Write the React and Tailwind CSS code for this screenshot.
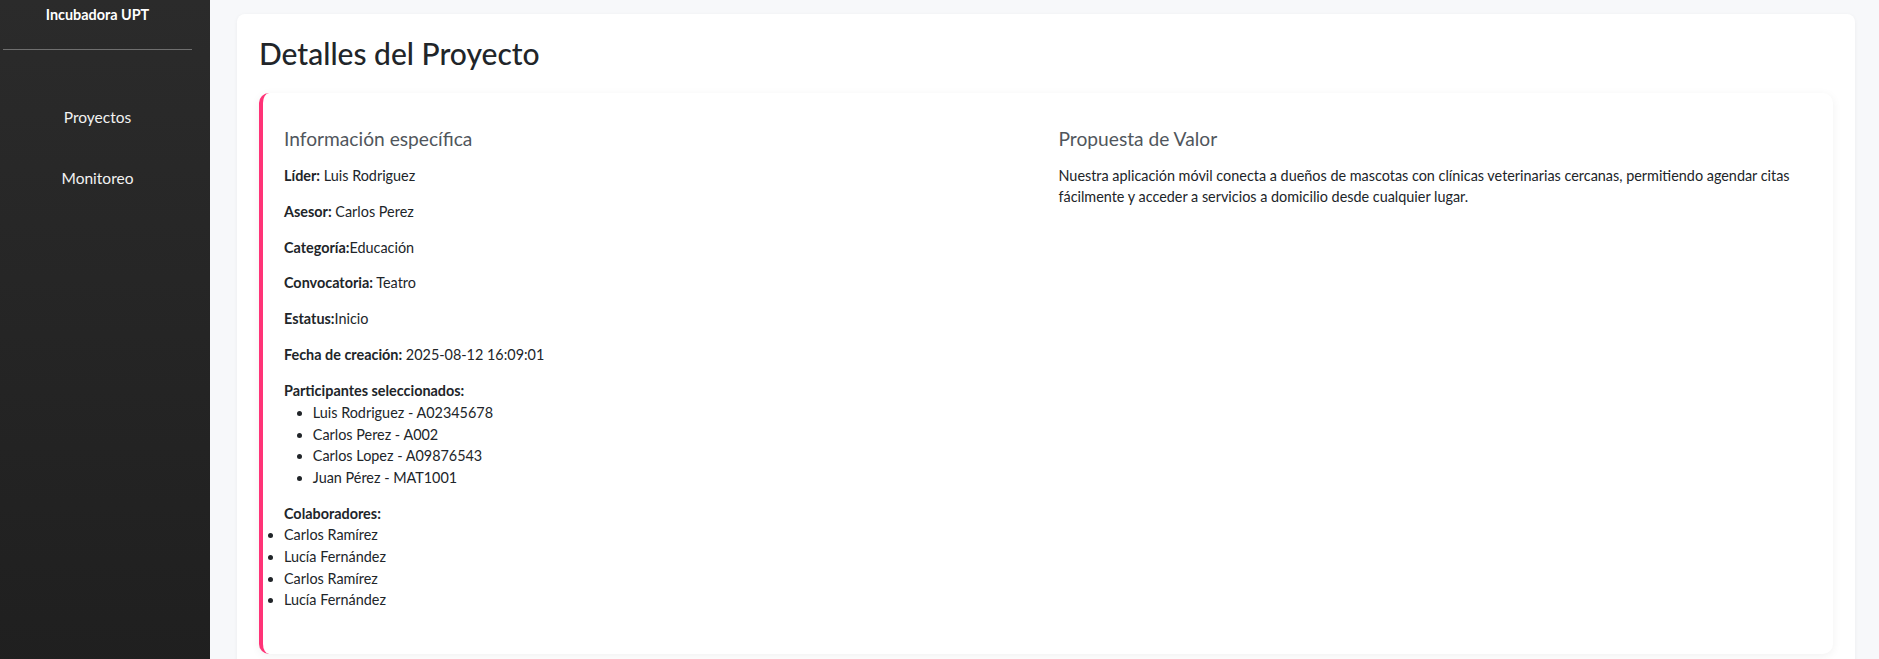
import React from 'react';

const participantes = [
  'Luis Rodriguez - A02345678',
  'Carlos Perez - A002',
  'Carlos Lopez - A09876543',
  'Juan Pérez - MAT1001',
];

const colaboradores = ['Carlos Ramírez', 'Lucía Fernández', 'Carlos Ramírez', 'Lucía Fernández'];

const Sidebar = () => (
  <aside className="w-[210px] shrink-0 bg-linear-to-b from-[#2b2b2b] to-[#1f1f1f] text-white">
    <div className="w-[195px]">
      <div className="pt-[4px] text-center text-[14.4px] font-bold leading-[21px]">Incubadora UPT</div>
      <hr className="mt-[24px] mx-[3px] border-0 border-t border-[#6f6f6f]" />
      <nav className="mt-[56px] flex flex-col gap-[39px] text-center text-[15.5px] leading-[22px] text-[#f2f2f2]">
        <a href="#">Proyectos</a>
        <a href="#">Monitoreo</a>
      </nav>
    </div>
  </aside>
);

const Field = ({ label, value, space = true }) => (
  <p className="mb-[14.4px]">
    <strong className="font-bold">{label}</strong>
    {space ? ' ' : ''}
    {value}
  </p>
);

const App = () => {
  return (
    <div className="flex min-h-screen bg-[#f7f8fa] font-[Lato,sans-serif] text-[#212529]">
      <Sidebar />
      <main className="flex-1 pl-[27px] pr-[24px] pt-[14px]">
        <div className="bg-white rounded-lg shadow-[0_1px_4px_rgba(0,0,0,0.05)] px-[22px] pt-[21px] pb-[22px]">
          <h1 className="text-[30px] font-medium leading-[36px] mb-[22px]">Detalles del Proyecto</h1>

          <div className="rounded-[10px] border-l-4 border-[#ff3377] bg-white shadow-[0_2px_10px_rgba(0,0,0,0.06)] pl-[21px] pr-[24px] pt-[34px] pb-[29px]">
            <div className="grid grid-cols-2 gap-6 text-[14.4px] leading-[21.6px]">
              <section>
                <h2 className="text-[19.2px] leading-[1.2] text-[#50565c] mb-[14.5px]">Información específica</h2>
                <Field label="Líder:" value="Luis Rodriguez" />
                <Field label="Asesor:" value="Carlos Perez" />
                <Field label="Categoría:" value="Educación" space={false} />
                <Field label="Convocatoria:" value="Teatro" />
                <Field label="Estatus:" value="Inicio" space={false} />
                <Field label="Fecha de creación:" value="2025-08-12 16:09:01" />

                <div>
                  <strong className="font-bold">Participantes seleccionados:</strong>
                  <ul className="list-disc pl-[28.8px] mb-[14.4px]">
                    {participantes.map((p, i) => (
                      <li key={i}>{p}</li>
                    ))}
                  </ul>
                </div>

                <div>
                  <strong className="font-bold">Colaboradores:</strong>
                  <ul className="list-disc pl-0 mb-[14.4px]">
                    {colaboradores.map((c, i) => (
                      <li key={i}>{c}</li>
                    ))}
                  </ul>
                </div>
              </section>

              <section>
                <h2 className="text-[19.2px] leading-[1.2] text-[#50565c] mb-[14.5px]">Propuesta de Valor</h2>
                <p>
                  Nuestra aplicación móvil conecta a dueños de mascotas con clínicas veterinarias cercanas, permitiendo
                  agendar citas fácilmente y acceder a servicios a domicilio desde cualquier lugar.
                </p>
              </section>
            </div>
          </div>
        </div>
      </main>
    </div>
  );
};

export default App;
